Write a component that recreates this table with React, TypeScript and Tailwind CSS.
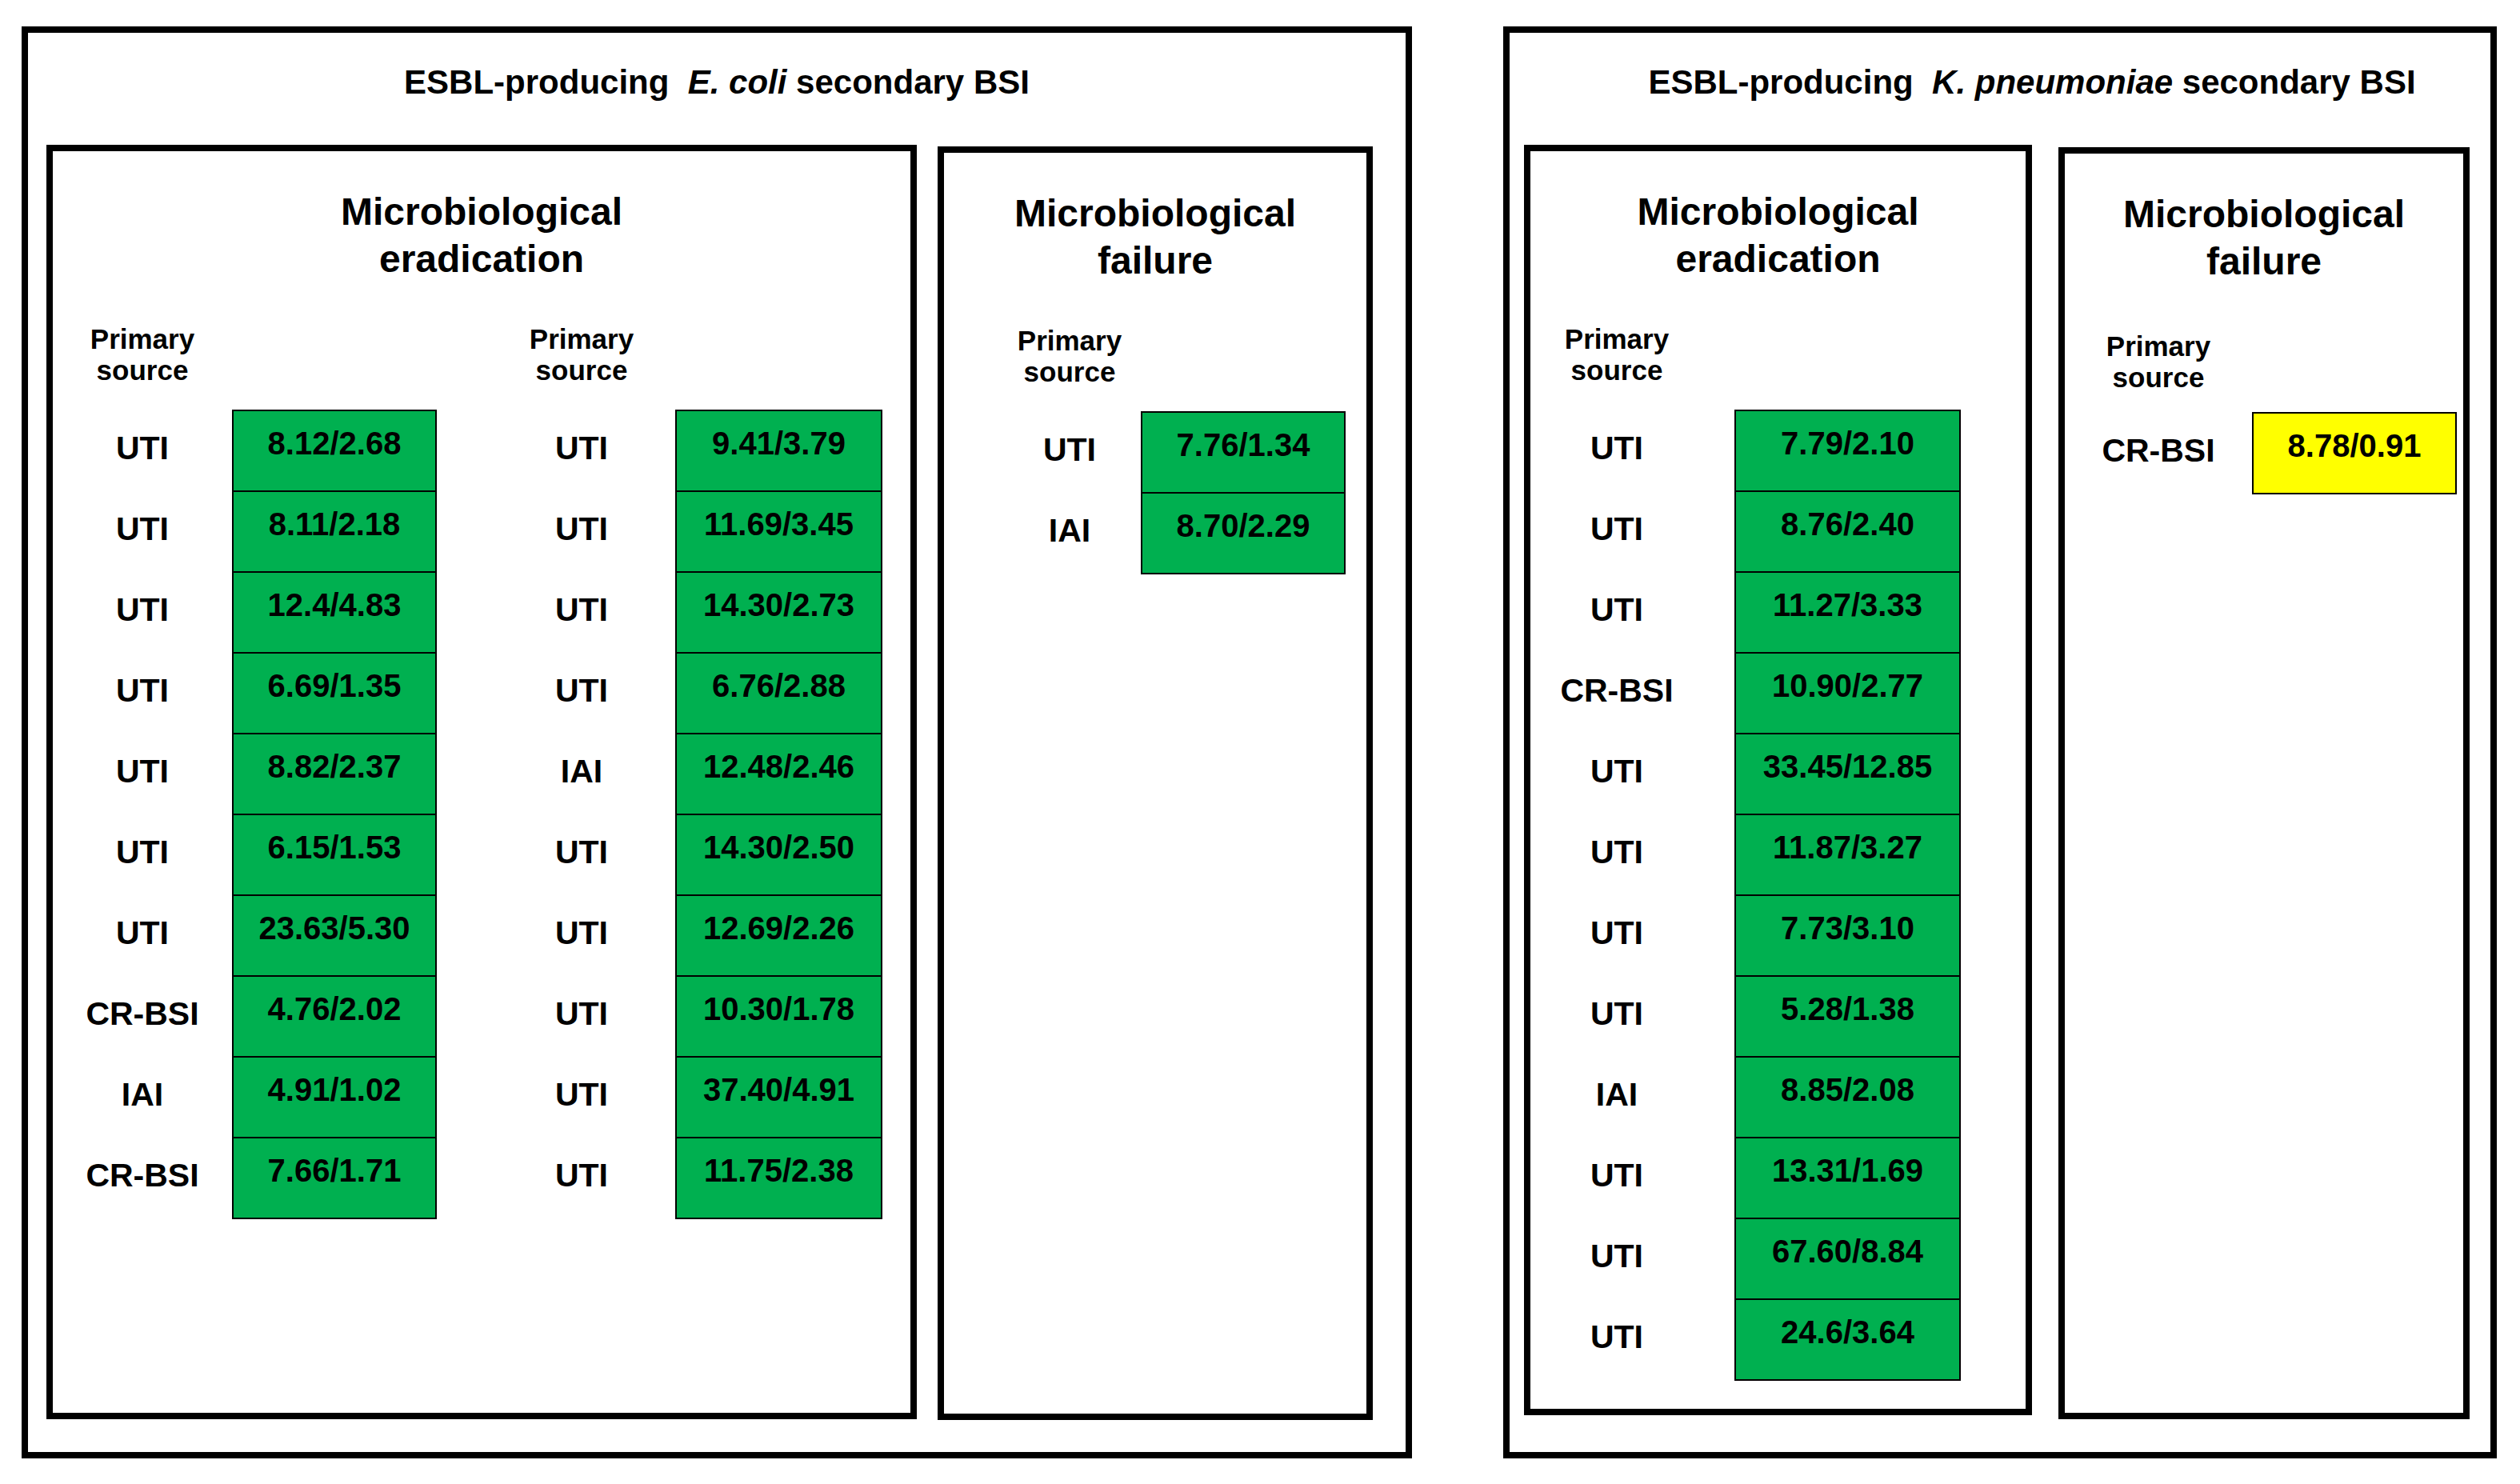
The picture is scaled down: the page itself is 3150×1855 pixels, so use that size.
import React from 'react';

type Row = [string, string];

interface Group {
  wrap: string;
  label: string;
  cell: string;
  head?: string;
  fill: string;
  rows: Row[];
}

interface Panel {
  box: string;
  title: string;
  groups: Group[];
}

const GREEN = 'bg-[#00b050]';
const YELLOW = 'bg-[#ffff00]';

const leftPanels: Panel[] = [
  {
    box: 'w-[1088px] h-[1593px]',
    title: 'eradication',
    groups: [
      {
        wrap: 'flex',
        label: 'w-[224px]',
        cell: 'w-[256px]',
        fill: GREEN,
        rows: [
          ['UTI', '8.12/2.68'],
          ['UTI', '8.11/2.18'],
          ['UTI', '12.4/4.83'],
          ['UTI', '6.69/1.35'],
          ['UTI', '8.82/2.37'],
          ['UTI', '6.15/1.53'],
          ['UTI', '23.63/5.30'],
          ['CR-BSI', '4.76/2.02'],
          ['IAI', '4.91/1.02'],
          ['CR-BSI', '7.66/1.71'],
        ],
      },
      {
        wrap: 'flex ml-[64px]',
        label: 'w-[234px]',
        cell: 'w-[259px]',
        fill: GREEN,
        rows: [
          ['UTI', '9.41/3.79'],
          ['UTI', '11.69/3.45'],
          ['UTI', '14.30/2.73'],
          ['UTI', '6.76/2.88'],
          ['IAI', '12.48/2.46'],
          ['UTI', '14.30/2.50'],
          ['UTI', '12.69/2.26'],
          ['UTI', '10.30/1.78'],
          ['UTI', '37.40/4.91'],
          ['UTI', '11.75/2.38'],
        ],
      },
    ],
  },
  {
    box: 'w-[544px] h-[1592px] mt-[2px]',
    title: 'failure',
    groups: [
      {
        wrap: 'flex ml-[68px]',
        label: 'w-[178px]',
        cell: 'w-[256px]',
        fill: GREEN,
        rows: [
          ['UTI', '7.76/1.34'],
          ['IAI', '8.70/2.29'],
        ],
      },
    ],
  },
];

const rightPanels: Panel[] = [
  {
    box: 'w-[635px] h-[1588px]',
    title: 'eradication',
    groups: [
      {
        wrap: 'flex',
        label: 'w-[216px]',
        cell: 'w-[283px] ml-[39px]',
        fill: GREEN,
        rows: [
          ['UTI', '7.79/2.10'],
          ['UTI', '8.76/2.40'],
          ['UTI', '11.27/3.33'],
          ['CR-BSI', '10.90/2.77'],
          ['UTI', '33.45/12.85'],
          ['UTI', '11.87/3.27'],
          ['UTI', '7.73/3.10'],
          ['UTI', '5.28/1.38'],
          ['IAI', '8.85/2.08'],
          ['UTI', '13.31/1.69'],
          ['UTI', '67.60/8.84'],
          ['UTI', '24.6/3.64'],
        ],
      },
    ],
  },
  {
    box: 'w-[514px] h-[1590px] mt-[3px]',
    title: 'failure',
    groups: [
      {
        wrap: 'flex',
        label: 'w-[234px]',
        cell: 'w-[256px]',
        head: 'pt-[6px]',
        fill: YELLOW,
        rows: [['CR-BSI', '8.78/0.91']],
      },
    ],
  },
];

const SourceGroup: React.FC<{ g: Group }> = ({ g }) => (
  <div className={g.wrap}>
    {/* label column */}
    <div className={`${g.label} flex flex-col`}>
      <div className={`h-[110px] text-center text-[35px] leading-[39px] ${g.head ?? ''}`}>
        Primary
        <br />
        source
      </div>
      {g.rows.map(([src], i) => (
        <div key={i} className="h-[101px] flex items-center justify-center pb-2 text-[41px]">
          {src}
        </div>
      ))}
    </div>

    {/* value column */}
    <div className={`${g.cell} flex flex-col`}>
      <div className="h-[108px]" />
      <div className={`border-x-2 border-t-2 border-black ${g.fill}`}>
        {g.rows.map(([, val], i) => (
          <div
            key={i}
            className="h-[101px] border-b-2 border-black pt-[17px] text-center text-[40px] leading-[46px]"
          >
            {val}
          </div>
        ))}
      </div>
    </div>
  </div>
);

const InnerPanel: React.FC<{ p: Panel }> = ({ p }) => (
  <div className={`${p.box} border-8 border-black flex flex-col`}>
    <div className="pt-[46px] text-center text-[48px] leading-[59px]">
      Microbiological
      <br />
      {p.title}
    </div>
    <div className="mt-[51px] flex">
      {p.groups.map((g, i) => (
        <SourceGroup key={i} g={g} />
      ))}
    </div>
  </div>
);

export default function App() {
  return (
    <div className="w-[3150px] h-[1855px] bg-white text-black font-bold font-['Liberation_Sans',Arial,sans-serif] flex gap-[114px] pl-[27px] pt-[33px]">
      {/* E. coli */}
      <div className="w-[1738px] h-[1790px] border-8 border-black flex flex-col">
        <div className="h-[140px] pt-[38px] text-center text-[42px] leading-[48px] whitespace-pre">
          {'ESBL-producing  '}
          <i>E. coli</i>
          {' secondary BSI'}
        </div>
        <div className="flex items-start gap-[26px] pl-[23px]">
          {leftPanels.map((p, i) => (
            <InnerPanel key={i} p={p} />
          ))}
        </div>
      </div>

      {/* K. pneumoniae */}
      <div className="w-[1242px] h-[1790px] border-8 border-black flex flex-col">
        <div className="h-[140px] pt-[38px] pl-[80px] text-center text-[42px] leading-[48px] whitespace-pre">
          {'ESBL-producing  '}
          <i>K. pneumoniae</i>
          {' secondary BSI'}
        </div>
        <div className="flex items-start gap-[33px] pl-[18px]">
          {rightPanels.map((p, i) => (
            <InnerPanel key={i} p={p} />
          ))}
        </div>
      </div>
    </div>
  );
}
